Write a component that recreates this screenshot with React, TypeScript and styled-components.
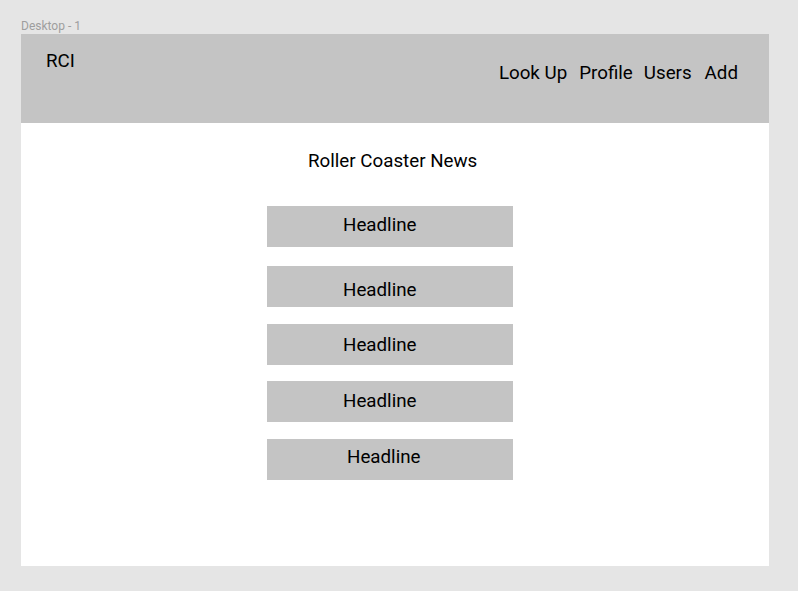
import styled, { createGlobalStyle } from 'styled-components';

const GlobalStyle = createGlobalStyle`
  html, body {
    margin: 0;
    padding: 0;
    background-color: #e5e5e5;
    font-family: Roboto, "Liberation Sans", Arial, sans-serif;
  }
`;

const Page = styled.div`
  padding: 19px 0 0 21px;
  min-height: 591px;
  box-sizing: border-box;
`;

const FrameLabel = styled.div`
  font-size: 12px;
  line-height: 14px;
  color: #9e9e9e;
  margin-bottom: 1px;
`;

const Frame = styled.div`
  width: 748px;
  height: 532px;
  background-color: #ffffff;
  display: flex;
  flex-direction: column;
`;

const Header = styled.header`
  height: 89px;
  background-color: #c4c4c4;
  display: flex;
  align-items: flex-start;
  padding: 0 31px 0 25px;
  box-sizing: border-box;
  color: #000000;
  font-size: 18.75px;
  line-height: 22px;
`;

const Logo = styled.div`
  padding-top: 16px;
`;

const Nav = styled.nav`
  margin-left: auto;
  padding-top: 28px;
  display: flex;
`;

const NavLink = styled.span<{ $gap?: number }>`
  margin-left: ${(p) => p.$gap ?? 0}px;
`;

const Content = styled.main`
  display: flex;
  flex-direction: column;
  padding-left: 246px;
`;

const Title = styled.h1`
  margin: 27px 0 0 41px;
  font-size: 18.75px;
  line-height: 22px;
  font-weight: 400;
  color: #000000;
`;

const HeadlineCard = styled.div<{ $top: number; $dx: number; $dy: number }>`
  margin-top: ${(p) => p.$top}px;
  width: 246px;
  height: 41px;
  box-sizing: border-box;
  background-color: #c4c4c4;
  padding: ${(p) => p.$dy}px 0 0 ${(p) => p.$dx}px;
  font-size: 18.75px;
  line-height: 22px;
  color: #000000;
`;

const headlines = [
  { top: 34, dx: 76, dy: 8 },
  { top: 19, dx: 76, dy: 13 },
  { top: 17, dx: 76, dy: 10 },
  { top: 16, dx: 76, dy: 9 },
  { top: 17, dx: 80, dy: 7 },
];

export default function App() {
  return (
    <Page>
      <GlobalStyle />
      <FrameLabel>Desktop - 1</FrameLabel>
      <Frame>
        <Header>
          <Logo>RCI</Logo>
          <Nav>
            <NavLink>Look Up</NavLink>
            <NavLink $gap={12}>Profile</NavLink>
            <NavLink $gap={11}>Users</NavLink>
            <NavLink $gap={13}>Add</NavLink>
          </Nav>
        </Header>
        <Content>
          <Title>Roller Coaster News</Title>
          {headlines.map((h, i) => (
            <HeadlineCard key={i} $top={h.top} $dx={h.dx} $dy={h.dy}>
              Headline
            </HeadlineCard>
          ))}
        </Content>
      </Frame>
    </Page>
  );
}
